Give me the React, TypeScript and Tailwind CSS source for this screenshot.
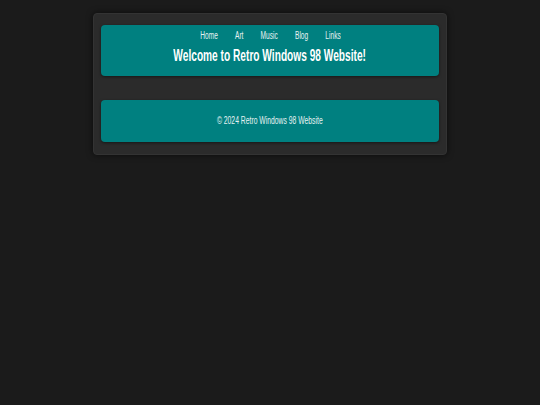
import React from "react";

export default function App() {
  const links = ["Home", "Art", "Music", "Blog", "Links"];
  return (
    <div
      className="min-h-[405px] w-full bg-[#1b1b1b] pt-[13px]"
      style={{ fontFamily: '"Liberation Sans Narrow", "Liberation Sans", Arial, sans-serif' }}
    >
      <div className="mx-auto w-[354px] rounded-[4px] border border-[#333333] bg-[#2b2b2b] px-[7px] pt-[11px] pb-[12px] shadow-[0_0_6px_rgba(0,0,0,0.6)]">
        <header className="flex h-[51px] flex-col items-center rounded-[4px] bg-[#008080] pt-[4px] shadow-[0_1px_3px_rgba(0,0,0,0.5)]">
          <nav className="flex h-[14px] scale-x-[0.66] items-center gap-[26px] text-[10px] leading-none text-[#e6f2f2]">
            {links.map((l) => (
              <span key={l}>{l}</span>
            ))}
          </nav>
          <h1 className="mt-[3px] inline-block scale-x-[0.635] whitespace-nowrap text-[16px] font-bold leading-[20px] text-white">
            Welcome to Retro Windows 98 Website!
          </h1>
        </header>
        <footer className="mt-[24px] flex h-[42px] items-center justify-center rounded-[4px] bg-[#008080] shadow-[0_1px_3px_rgba(0,0,0,0.5)]">
          <p className="inline-block scale-x-[0.68] whitespace-nowrap text-[10px] leading-none text-[#e6f2f2]">
            © 2024 Retro Windows 98 Website
          </p>
        </footer>
      </div>
    </div>
  );
}
